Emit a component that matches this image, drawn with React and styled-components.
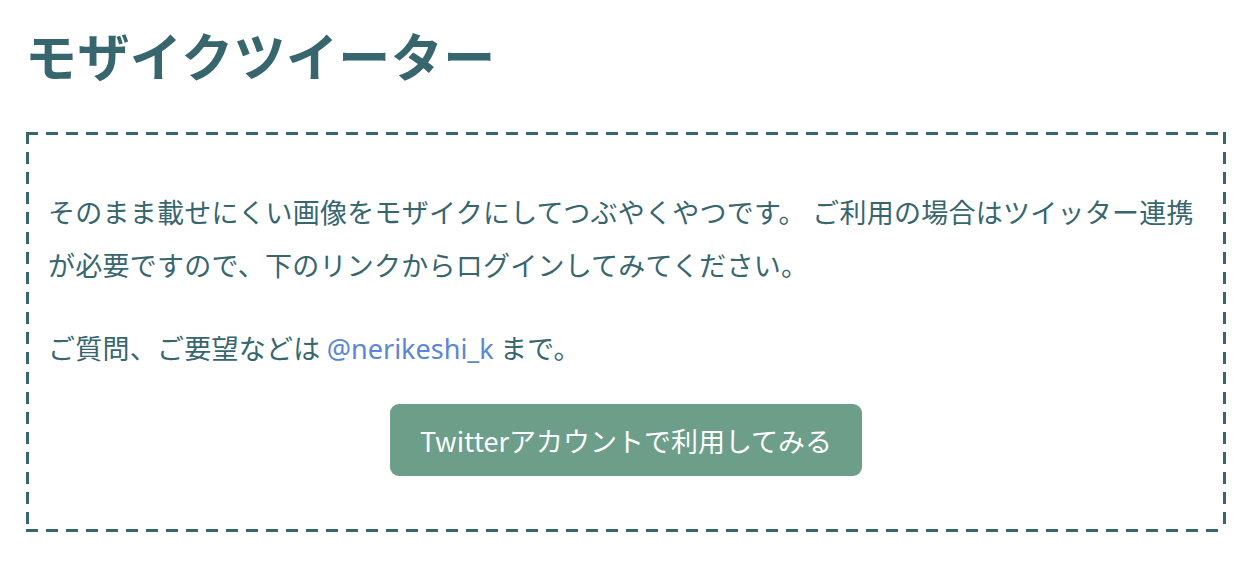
import React from "react";
import styled, { createGlobalStyle } from "styled-components";

const GlobalStyle = createGlobalStyle`
  body {
    margin: 0;
    background: #ffffff;
    font-family: "Noto Sans CJK JP", "Noto Sans", sans-serif;
    color: #37666f;
  }
`;

export default function App() {
  return (
    <>
      <GlobalStyle />
      <Page>
        <Title>モザイクツイーター</Title>
        <Box>
          <Text>
            そのまま載せにくい画像をモザイクにしてつぶやくやつです。 ご利用の場合はツイッター連携
            <br />
            が必要ですので、下のリンクからログインしてみてください。
          </Text>
          <Text $last>
            ご質問、ご要望などは <Link href="#">@nerikeshi_k</Link> まで。
          </Text>
          <ButtonRow>
            <LoginButton>Twitterアカウントで利用してみる</LoginButton>
          </ButtonRow>
        </Box>
      </Page>
    </>
  );
}

const Page = styled.div`
  padding: 29px 26px 40px 26px;
`;

const Title = styled.h1`
  margin: 0 0 51px -1px;
  font-size: 52px;
  line-height: 52px;
  font-weight: 700;
  letter-spacing: 0.4px;
  color: #37666f;
`;

const dash = "#37666f";

const Box = styled.div`
  width: 1200px;
  box-sizing: border-box;
  padding: 53px 8px 56px 22px;
  background-image:
    repeating-linear-gradient(to right, ${dash} 0 12px, transparent 12px 20px),
    repeating-linear-gradient(to right, ${dash} 0 12px, transparent 12px 20px),
    repeating-linear-gradient(to bottom, ${dash} 0 12px, transparent 12px 20px),
    repeating-linear-gradient(to bottom, ${dash} 0 12px, transparent 12px 20px);
  background-size: 100% 3px, 100% 3px, 3px 100%, 3px 100%;
  background-position: 0 0, 0 100%, 0 0, 100% 0;
  background-repeat: no-repeat;
`;

const Text = styled.p`
  margin: 0 0 ${(p) => (p.$last ? "29px" : "30px")} 0;
  font-size: 27px;
  line-height: 53px;
  letter-spacing: 0.25px;
  white-space: nowrap;
  color: #37666f;
`;

const Link = styled.a`
  color: #5b86d6;
  text-decoration: none;
  letter-spacing: 0;
  font-family: "Noto Sans", "Noto Sans CJK JP", sans-serif;
`;

const ButtonRow = styled.div`
  display: flex;
  justify-content: center;
  padding-right: 14px;
`;

const LoginButton = styled.button`
  height: 72px;
  padding: 0 30px;
  border: none;
  border-radius: 9px;
  background: #6c9e8a;
  color: #ffffff;
  font-family: "Noto Sans CJK JP", "Noto Sans", sans-serif;
  font-size: 27px;
  cursor: pointer;
`;
